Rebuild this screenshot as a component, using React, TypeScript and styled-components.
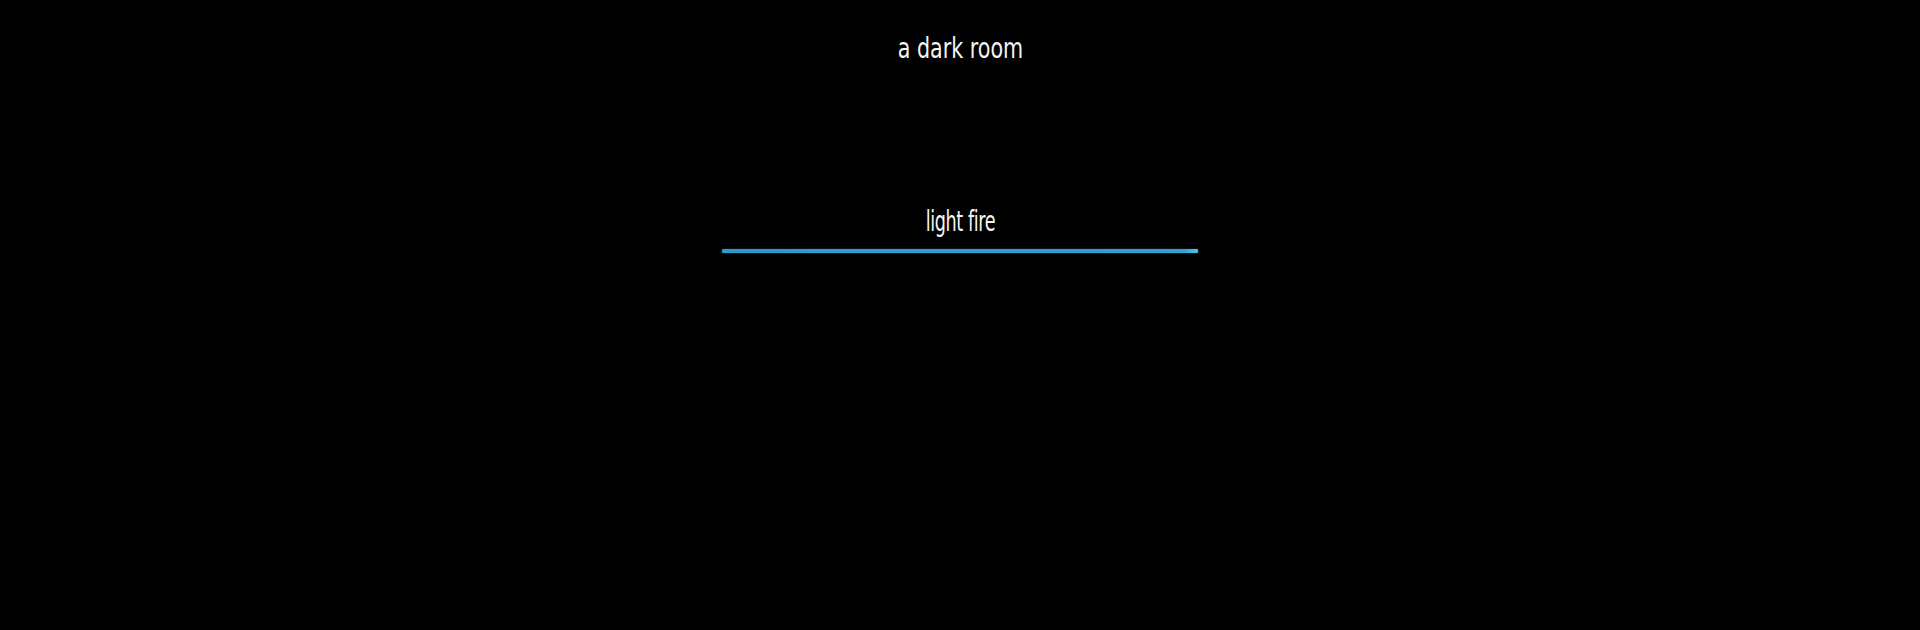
import React from 'react';
import styled, { createGlobalStyle } from 'styled-components';

const GlobalStyle = createGlobalStyle`
  html, body {
    margin: 0;
    padding: 0;
    background: #000;
    height: 100%;
  }
  body {
    font-family: "DejaVu Sans Condensed", "Liberation Sans Narrow", Roboto, sans-serif;
    color: #fff;
  }
`;

const Page = styled.div`
  width: 1920px;
  height: 630px;
  background: #000;
  display: flex;
  flex-direction: column;
  align-items: center;
`;

const Title = styled.h1`
  margin: 34px 0 0;
  font-size: 28px;
  font-weight: 400;
  line-height: 30px;
  color: #f4f4f4;
  transform: scaleX(0.82);
`;

const ButtonWrap = styled.div`
  margin-top: 142px;
  width: 476px;
  display: flex;
  flex-direction: column;
  align-items: center;
  cursor: pointer;
`;

const ButtonLabel = styled.span`
  display: inline-block;
  font-size: 28px;
  line-height: 32px;
  letter-spacing: -0.6px;
  color: #f4f4f4;
  transform: scaleX(0.7);
`;

const Cooldown = styled.div`
  margin-top: 11px;
  width: 100%;
  height: 4px;
  border-radius: 1px;
  background: linear-gradient(to right, #2a9ccc 0%, #30a2cc 97%, #4ec6ee 100%);
  box-shadow: 0 0 2px rgba(60, 170, 210, 0.5);
`;

export default function App() {
  return (
    <Page>
      <GlobalStyle />
      <Title>a dark room</Title>
      <ButtonWrap>
        <ButtonLabel>light fire</ButtonLabel>
        <Cooldown />
      </ButtonWrap>
    </Page>
  );
}
